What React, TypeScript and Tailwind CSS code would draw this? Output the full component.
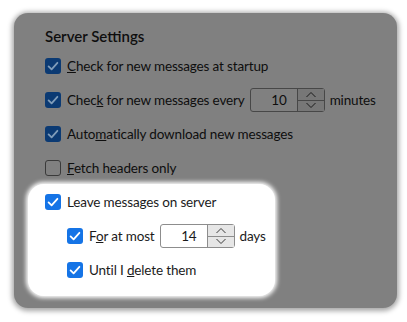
import type { ReactNode } from "react";

type Tone = "dim" | "lit";

function CheckBox({ checked, tone }: { checked: boolean; tone: Tone }) {
  if (!checked) {
    return (
      <span
        className={`h-4 w-4 shrink-0 rounded-[3px] border ${
          tone === "dim" ? "border-[#3a3a3a] bg-[#808080]" : "border-[#757575] bg-white"
        }`}
      />
    );
  }
  return (
    <span
      className={`flex h-4 w-4 shrink-0 items-center justify-center rounded-[3px] ${
        tone === "dim" ? "bg-[#0b3a73]" : "bg-[#1574e6]"
      }`}
    >
      <svg viewBox="0 0 16 16" className="h-4 w-4">
        <polyline
          points="3.6,8.4 6.6,11.3 12.4,4.8"
          fill="none"
          stroke={tone === "dim" ? "#7f9cb9" : "#ffffff"}
          strokeWidth="1.8"
          strokeLinecap="round"
          strokeLinejoin="round"
        />
      </svg>
    </span>
  );
}

function Spin({ value, tone }: { value: string; tone: Tone }) {
  const dim = tone === "dim";
  const chevron = dim ? "#1a1a1a" : "#3a3a3a";
  return (
    <div
      className={`flex h-[24px] w-[75px] shrink-0 rounded-[3px] border ${
        dim ? "border-[#474747]" : "border-[#8d8d8d]"
      }`}
    >
      <div className="flex flex-1 items-center justify-end pr-[10px]">{value}</div>
      <div
        className={`flex w-[27px] flex-col border-l ${
          dim ? "border-[#474747] bg-[#777777]" : "border-[#8d8d8d] bg-[#e6e6e6]"
        }`}
      >
        <div
          className={`flex flex-1 items-center justify-center border-b ${
            dim ? "border-[#474747]" : "border-[#8d8d8d]"
          }`}
        >
          <svg viewBox="0 0 12 7" className="h-[7px] w-[12px]">
            <polyline points="1.5,6 6,1.5 10.5,6" fill="none" stroke={chevron} strokeWidth="1" />
          </svg>
        </div>
        <div className="flex flex-1 items-center justify-center">
          <svg viewBox="0 0 12 7" className="h-[7px] w-[12px]">
            <polyline points="1.5,1 6,5.5 10.5,1" fill="none" stroke={chevron} strokeWidth="1" />
          </svg>
        </div>
      </div>
    </div>
  );
}

function Row({
  checked,
  tone,
  indent,
  children,
}: {
  checked: boolean;
  tone: Tone;
  indent?: boolean;
  children: ReactNode;
}) {
  return (
    <div
      className={`flex h-[34px] items-center gap-[5px] whitespace-nowrap ${indent ? "pl-[22px]" : ""}`}
    >
      <CheckBox checked={checked} tone={tone} />
      {children}
    </div>
  );
}

export default function App() {
  return (
    <div
      className="h-[322px] w-[407px] overflow-hidden bg-white pl-[14px] pt-[13px] text-[13.5px] tracking-[-0.15px]"
      style={{ fontFamily: 'Lato, "Noto Sans", sans-serif' }}
    >
      <div className="h-[295px] w-[383px] rounded-[14px] bg-[#808080] pl-[31px] pt-[13px] text-[#0e0e0e] shadow-[0_1px_5px_2px_rgba(0,0,0,0.35)]">
        <h2 className="mb-[3px] h-[20px] text-[15px] font-semibold leading-[20px] tracking-normal">
          Server Settings
        </h2>

        <Row checked tone="dim">
          <span className="pl-px">
            <u>C</u>heck for new messages at startup
          </span>
        </Row>
        <Row checked tone="dim">
          <span className="pl-px">
            Chec<u>k</u> for new messages every
          </span>
          <Spin value="10" tone="dim" />
          <span>minutes</span>
        </Row>
        <Row checked tone="dim">
          <span className="pl-px">
            Auto<u>m</u>atically download new messages
          </span>
        </Row>
        <Row checked={false} tone="dim">
          <span className="pl-px">
            <u>F</u>etch headers only
          </span>
        </Row>

        <div className="-ml-[17px] mt-[-1px] w-[247px] rounded-[16px] bg-white pb-[9px] pl-[17px] pt-[1px] text-[#1b1b1b] shadow-[0_0_4px_2px_#ffffff]">
          <Row checked tone="lit">
            <span className="pl-px">
              Leave messa<u>g</u>es on server
            </span>
          </Row>
          <Row checked tone="lit" indent>
            <span className="pl-px">
              F<u>o</u>r at most
            </span>
            <Spin value="14" tone="lit" />
            <span>days</span>
          </Row>
          <Row checked tone="lit" indent>
            <span className="pl-px">
              Until I <u>d</u>elete them
            </span>
          </Row>
        </div>
      </div>
    </div>
  );
}
